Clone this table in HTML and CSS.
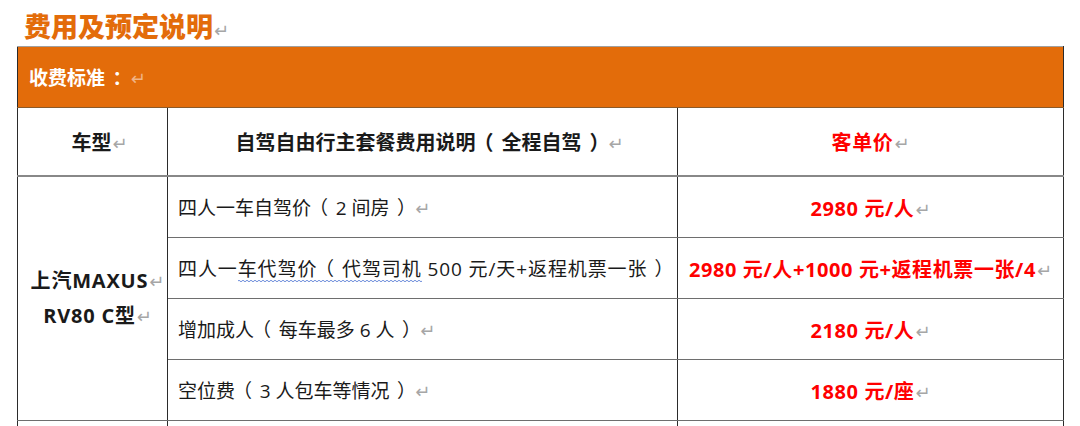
FILE: index.html
```html
<!DOCTYPE html>
<html lang="zh">
<head>
<meta charset="utf-8">
<link rel="stylesheet" href="styles.css">
</head>
<body>
<h1 class="title">费用及预定说明<span class="pm">↵</span></h1>
<table class="fee">
  <colgroup>
    <col class="c1"><col class="c2"><col class="c3">
  </colgroup>
  <tr class="band">
    <td colspan="3">收费标准<span class="p">：</span><span class="pm light">↵</span></td>
  </tr>
  <tr class="head">
    <td class="center bold shift">车型<span class="pm">↵</span></td>
    <td class="center bold shift">自驾自由行主套餐费用说明<span class="p">（</span>全程自驾<span class="p">）</span><span class="pm">↵</span></td>
    <td class="center bold red">客单价<span class="pm">↵</span></td>
  </tr>
  <tr class="row">
    <td class="car center bold" rowspan="4">
      <div class="line">上汽MAXUS<span class="pm">↵</span></div>
      <div class="line">RV80 C型<span class="pm">↵</span></div>
    </td>
    <td class="desc">四人一车自驾价<span class="p">（</span>2 间房<span class="p">）</span><span class="pm">↵</span></td>
    <td class="center bold red">2980 元/人<span class="pm">↵</span></td>
  </tr>
  <tr class="row">
    <td class="desc spread">四人一<span class="wavy">车代驾价<span class="p">（</span>代驾司机</span> 500 元/天+返程机票一张<span class="p">）</span></td>
    <td class="center bold red nowrap">2980 元/人+1000 元+返程机票一张/4<span class="pm">↵</span></td>
  </tr>
  <tr class="row">
    <td class="desc">增加成人<span class="p">（</span>每车最多 6 人<span class="p">）</span><span class="pm">↵</span></td>
    <td class="center bold red">2180 元/人<span class="pm">↵</span></td>
  </tr>
  <tr class="row">
    <td class="desc">空位费<span class="p">（</span>3 人包车等情况<span class="p">）</span><span class="pm">↵</span></td>
    <td class="center bold red">1880 元/座<span class="pm">↵</span></td>
  </tr>
  <tr class="row">
    <td></td><td></td><td></td>
  </tr>
</table>
</body>
</html>
```
FILE: styles.css
```css
html, body {
  margin: 0;
  padding: 0;
  background: #fff;
  overflow: hidden;
}
body {
  width: 1080px;
  height: 426px;
  font-family: "Open Sans", "Noto Sans CJK SC", sans-serif;
  color: #1a1a1a;
}
.title {
  margin: 0;
  padding: 8px 0 0 24px;
  height: 38px;
  line-height: 38px;
  font-size: 27px;
  font-weight: 800;
  color: #e36c0a;
}
.p {
  display: inline-block;
  width: 1.3em;
  text-align: center;
  font-feature-settings: "halt";
}
.pm {
  font-family: "DejaVu Sans", sans-serif;
  font-weight: 400;
  font-size: 18px;
  letter-spacing: 0;
  color: #a6a6a6;
  margin-left: 1px;
}
.pm.light {
  color: #f0b488;
}
.fee {
  margin-left: 17px;
  border-collapse: collapse;
  table-layout: fixed;
  width: 1046px;
  font-size: 19px;
}
.c1 { width: 150px; }
.c2 { width: 510px; }
.c3 { width: 386px; }
.fee td {
  border-left: 1.5px solid #2b2b2b;
  border-right: 1.5px solid #2b2b2b;
  border-top: 1.5px solid #6e6e6e;
  border-bottom: 1.5px solid #6e6e6e;
  padding: 0;
  vertical-align: middle;
}
.band td {
  background: #e36c0a;
  color: #fff;
  font-weight: 700;
  height: 60px;
  padding-left: 11px;
  border-top: 1.5px solid #a0a0a0;
  border-bottom: 1.5px solid #8a5a2a;
}
.head td {
  height: 67px;
  border-bottom: 2px solid #888;
}
.row td {
  height: 60px;
}
.center { text-align: center; }
.bold {
  font-weight: 700;
  font-size: 20px;
}
.head .shift {
  padding-left: 14px;
}
.red {
  color: #ff0000;
  letter-spacing: 0.6px;
}
.car {
  letter-spacing: 0.8px;
  padding-left: 10px !important;
}
.desc {
  padding-left: 10px !important;
  white-space: nowrap;
}
.spread {
  letter-spacing: 0.9px;
}
.nowrap {
  white-space: nowrap;
  overflow: hidden;
}
.car .line {
  line-height: 34px;
}
.wavy {
  background-image: url("data:image/svg+xml,%3Csvg xmlns='http://www.w3.org/2000/svg' width='4' height='3'%3E%3Cpath d='M0 2 Q1 0.5 2 2 T4 2' fill='none' stroke='%235b7fd6' stroke-width='0.9'/%3E%3C/svg%3E");
  background-repeat: repeat-x;
  background-position: 0 100%;
  background-size: 4px 3px;
}
```
